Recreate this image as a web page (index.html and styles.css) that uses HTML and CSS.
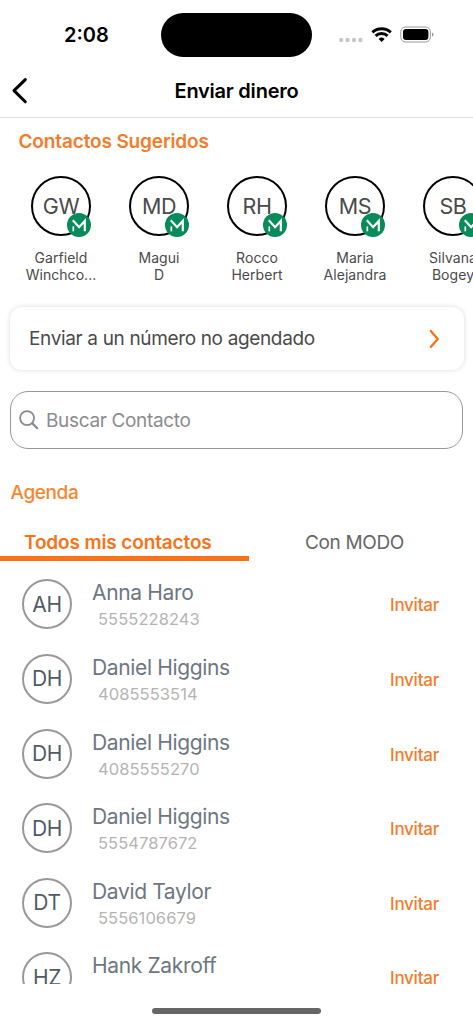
FILE: index.html
```html
<!DOCTYPE html>
<html lang="es">
<head>
<meta charset="utf-8">
<title>Enviar dinero</title>
<link rel="stylesheet" href="styles.css">
</head>
<body>
<svg class="defs" aria-hidden="true">
  <symbol id="modo" viewBox="0 0 24 24">
    <circle cx="12" cy="12" r="12" fill="#078b5b"/>
    <path d="M6.3 13.4v4.9" stroke="#fff" stroke-width="1.7" fill="none"/>
    <path d="M5.8 7.2l6.3 7 5.7-6.3v10.4" stroke="#fff" stroke-width="2.2" fill="none"/>
  </symbol>
</svg>
<div class="screen">
  <div class="status">
    <span class="time">2:08</span>
    <span class="island"></span>
    <svg class="indicators" width="96" height="20" viewBox="0 0 96 20">
      <g fill="#c8c8c8"><circle cx="3.2" cy="14" r="2.2"/><circle cx="9.6" cy="14" r="2.2"/><circle cx="16" cy="14" r="2.2"/><circle cx="22.4" cy="14" r="2.2"/></g>
      <g fill="none" stroke="#000" stroke-width="2.9">
        <path d="M34.4 6.4a13.4 13.4 0 0 1 18.4 0"/>
        <path d="M37.6 9.9a8.7 8.7 0 0 1 12 0"/>
      </g>
      <path d="M43.6 16l-3-3.1a4.4 4.4 0 0 1 6 0z"/>
      <rect x="62.8" y="1" width="29.6" height="15" rx="4.8" fill="none" stroke="#999" stroke-width="1"/>
      <rect x="65" y="3" width="25.4" height="11" rx="3"/>
      <path d="M94 6.5a2.2 2.2 0 0 1 0 4.2z" fill="#999"/>
    </svg>
  </div>
  <header class="nav">
    <svg class="back" width="18" height="28" viewBox="0 0 18 28"><path d="M15.3 2.6L4 13.6l11.3 11.2" fill="none" stroke="#000" stroke-width="3" stroke-linecap="round" stroke-linejoin="round"/></svg>
    <h1 class="title">Enviar dinero</h1>
  </header>
  <h2 class="suggested-title">Contactos Sugeridos</h2>
  <div class="suggested">
    <div class="person"><div class="ring">GW<svg class="badge"><use href="#modo"/></svg></div><div class="pname">Garfield<br>Winchco...</div></div>
    <div class="person"><div class="ring">MD<svg class="badge"><use href="#modo"/></svg></div><div class="pname">Magui<br>D</div></div>
    <div class="person"><div class="ring">RH<svg class="badge"><use href="#modo"/></svg></div><div class="pname">Rocco<br>Herbert</div></div>
    <div class="person"><div class="ring">MS<svg class="badge"><use href="#modo"/></svg></div><div class="pname">Maria<br>Alejandra</div></div>
    <div class="person"><div class="ring">SB<svg class="badge"><use href="#modo"/></svg></div><div class="pname">Silvana<br>Bogey</div></div>
  </div>
  <div class="card">
    <span class="card-text">Enviar a un número no agendado</span>
    <svg width="12" height="20" viewBox="0 0 12 20"><path d="M2.8 2l7 8-7 8" fill="none" stroke="#f97316" stroke-width="2.3" stroke-linecap="round" stroke-linejoin="round"/></svg>
  </div>
  <div class="search">
    <svg width="20" height="20" viewBox="0 0 20 20"><g fill="none" stroke="#8b8b8f" stroke-linecap="round"><circle cx="8.1" cy="8.1" r="7" stroke-width="1.8"/><path d="M13.4 13.4l4.8 4.8" stroke-width="2.2"/></g></svg>
    <span class="placeholder">Buscar Contacto</span>
  </div>
  <h2 class="agenda">Agenda</h2>
  <div class="tabs">
    <div class="tab active"><span>Todos mis contactos</span></div>
    <div class="tab"><span>Con MODO</span></div>
  </div>
  <div class="list">
    <div class="row"><div class="avatar">AH</div><div class="info"><div class="name">Anna Haro</div><div class="phone">5555228243</div></div><span class="invite">Invitar</span></div>
    <div class="row"><div class="avatar">DH</div><div class="info"><div class="name">Daniel Higgins</div><div class="phone">4085553514</div></div><span class="invite">Invitar</span></div>
    <div class="row"><div class="avatar">DH</div><div class="info"><div class="name">Daniel Higgins</div><div class="phone">4085555270</div></div><span class="invite">Invitar</span></div>
    <div class="row"><div class="avatar">DH</div><div class="info"><div class="name">Daniel Higgins</div><div class="phone">5554787672</div></div><span class="invite">Invitar</span></div>
    <div class="row"><div class="avatar">DT</div><div class="info"><div class="name">David Taylor</div><div class="phone">5556106679</div></div><span class="invite">Invitar</span></div>
    <div class="row"><div class="avatar">HZ</div><div class="info"><div class="name">Hank Zakroff</div></div><span class="invite">Invitar</span></div>
  </div>
  <div class="home"></div>
</div>
</body>
</html>
```
FILE: styles.css
```css
* { box-sizing: border-box; }
body { margin: 0; background: #fff; font-family: Inter, "Liberation Sans", sans-serif; }
h1, h2 { margin: 0; }
svg { display: block; flex: none; }
.defs { position: absolute; width: 0; height: 0; }
.screen { width: 473px; height: 1024px; overflow: hidden; display: flex; flex-direction: column; background: #fff; }
.screen > * { flex: none; }
.status { height: 64px; display: grid; grid-template-columns: 161px 151px 1fr; align-items: start; padding-top: 13px; }
.time { padding-left: 64px; margin-top: 10px; font-size: 20px; line-height: 24px; font-weight: 600; }
.island { height: 44px; border-radius: 22px; background: #000; }
.indicators { margin: 13px 0 0 26px; }
.nav { height: 54px; border-bottom: 1px solid #dedede; display: grid; grid-template-columns: 40px 1fr 40px; align-items: center; }
.back { margin-left: 10px; }
.title { font-size: 20px; line-height: 24px; font-weight: 600; text-align: center; letter-spacing: -0.23px; }
.suggested-title { padding: 12px 0 0 18.5px; font-size: 19px; line-height: 24px; font-weight: 600; color: #f47b29; letter-spacing: -0.14px; }
.suggested { display: flex; margin: 22px 0 0 12px; width: 490px; height: 107px; }
.person { width: 98px; display: flex; flex-direction: column; align-items: center; }
.ring { position: relative; width: 60px; height: 60px; border: 2px solid #000; border-radius: 50%; display: flex; align-items: center; justify-content: center; font-size: 21.5px; color: #4a4a4a; letter-spacing: -0.4px; }
.badge { position: absolute; right: -2px; bottom: -2.5px; width: 24px; height: 24px; }
.pname { margin-top: 12.5px; font-size: 14px; line-height: 17px; text-align: center; color: #4a4a4a; letter-spacing: 0.05px; }
.card { margin: 24px 9px 0 10px; height: 63px; border-radius: 12px; background: #fff; box-shadow: 0 0 5px rgba(0,0,0,.15); display: flex; align-items: center; justify-content: space-between; padding: 0 24px 0 19px; }
.card-text { font-size: 19px; color: #4a4a4a; letter-spacing: -0.35px; }
.search { margin: 21px 10px 0; height: 58px; border: 1px solid #999; border-radius: 18px; display: flex; align-items: center; gap: 7px; padding-left: 8px; }
.placeholder { font-size: 19px; color: #8b8b8f; letter-spacing: -0.34px; }
.agenda { margin: 32px 0 0 10.5px; font-size: 19px; line-height: 24px; font-weight: 500; color: #fa852c; letter-spacing: -0.4px; }
.tabs { margin-top: 21px; height: 35px; display: flex; }
.tab { width: 224px; padding: 2px 0 0 56px; font-size: 19px; line-height: 30px; color: #666; letter-spacing: -0.35px; }
.tab.active { width: 249px; padding-left: 24px; border-bottom: 5px solid #f97316; color: #f97316; font-weight: 600; letter-spacing: -0.13px; }
.list { margin-top: 6px; height: 417px; overflow: hidden; }
.row { height: 74.6px; display: flex; align-items: flex-start; padding: 12.4px 34px 0 22px; }
.avatar { width: 50px; height: 50px; border: 2px solid #999; border-radius: 50%; display: flex; align-items: center; justify-content: center; font-size: 21px; color: #4f5b66; letter-spacing: -0.4px; }
.info { flex: 1; padding-left: 20px; }
.name { font-size: 21px; line-height: 27px; color: #6c7782; letter-spacing: -0.35px; }
.phone { padding-left: 6px; font-size: 16.5px; line-height: 27px; color: #b4b4b4; letter-spacing: 0.07px; }
.invite { font-size: 17px; line-height: 52px; font-weight: 500; color: #f47b29; letter-spacing: -0.25px; }
.home { margin: 24px 0 0 152px; width: 169px; height: 6px; border-radius: 3px; background: #666; }
```
